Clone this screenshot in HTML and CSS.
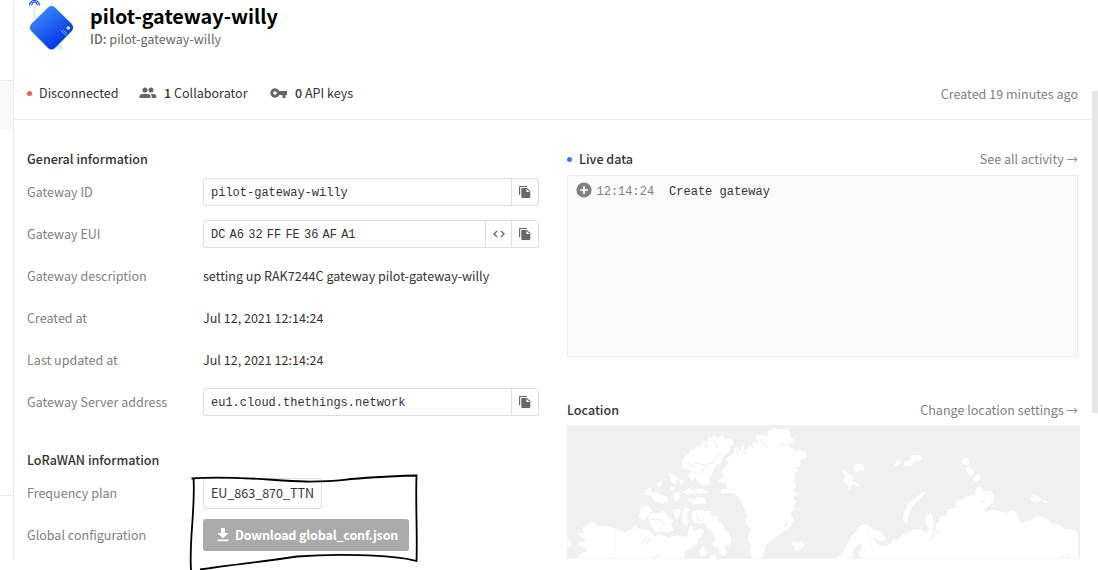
FILE: index.html
```html
<!DOCTYPE html>
<html lang="en">
<head>
<meta charset="utf-8">
<title>pilot-gateway-willy</title>
<link rel="stylesheet" href="styles.css">
</head>
<body>
<svg class="defs" aria-hidden="true">
  <symbol id="copy" viewBox="0 0 14 14"><path d="M1 10V2Q1 1 2 1H9V2H2.2V10Z"/><path d="M4.4 3H9L12.3 6.3V12Q12.3 13 11.3 13H4.4Q3.3 13 3.3 12V4Q3.3 3 4.4 3ZM8.4 3.8V7H11.6Z" fill-rule="evenodd"/></symbol>
</svg>
<div class="page">
  <aside class="sidebar"><div class="nav-active"></div><div class="nav-rest"></div></aside>
  <main class="main">
    <header class="header">
      <div class="identity">
        <svg class="logo" width="48" height="52" viewBox="0 0 48 52">
          <defs><linearGradient id="blue" x1=".35" y1="0" x2=".65" y2="1" gradientTransform="rotate(-20 .5 .5)"><stop offset="0" stop-color="#3e8cff"/><stop offset="1" stop-color="#002be2"/></linearGradient></defs>
          <path d="M7.500 7V20M28 44L34 50M31 44L36 49" stroke="#d5eaff" stroke-width="2" fill="none"/>
          <path d="M2.500 5.500A5 5 0 1 1 12.500 5.500M5 5.500A2.600 2.600 0 1 1 10 5.500" fill="none" stroke="#2450dc" stroke-width="1.200"/>
          <path d="M21 7.500Q24.500 4.200 28 7.500L44.300 23.500Q47.800 27.500 44.300 31.500L28 48Q24.500 51.200 21 48L4.700 31.500Q1.200 27.500 4.700 23.500Z" fill="url(#blue)"/>
          <circle cx="41.300" cy="28" r="1.800" fill="#d9efff"/>
          <path d="M34 30.500L39 35.500M36.300 30L40 33.700" stroke="#8fc5ff" stroke-width="1"/>
        </svg>
        <div class="titles">
          <h1>pilot-gateway-willy</h1>
          <p class="gid"><b>ID:</b> pilot-gateway-willy</p>
        </div>
      </div>
      <div class="status">
        <i class="dot red"></i><span class="disc">Disconnected</span>
        <svg class="people" width="18" height="12" viewBox="0 0 18 12"><g fill="#666"><circle cx="6" cy="3" r="2.500"/><circle cx="12" cy="3" r="2.500"/><path d="M.5 11V9Q.5 6.700 6 6.700T11.500 9V11ZM12.700 11V9Q12.700 7.600 11.500 6.800Q17.300 6.800 17.300 9V11Z"/></g></svg>
        <span class="collab"><b>1</b> Collaborator</span>
        <svg class="key" width="18" height="12" viewBox="0 0 18 12"><path fill="#666" fill-rule="evenodd" d="M9.300 4A4.700 4.700 0 1 0 9.300 8H12.500V11H15.500V8H17V4ZM5 4.200A1.800 1.800 0 1 1 5 7.800A1.800 1.800 0 1 1 5 4.200Z"/></svg>
        <span class="keys"><b>0</b> API keys</span>
        <span class="created">Created 19 minutes ago</span>
      </div>
    </header>
    <div class="columns">
      <section class="info">
        <h2>General information</h2>
        <div class="row"><span class="label">Gateway ID</span><div class="field"><code>pilot-gateway-willy</code><span class="btn"><svg><use href="#copy"/></svg></span></div></div>
        <div class="row"><span class="label">Gateway EUI</span><div class="field"><code class="eui"><span>DC</span><span>A6</span><span>32</span><span>FF</span><span>FE</span><span>36</span><span>AF</span><span>A1</span></code><span class="btn narrow"><svg viewBox="0 0 14 14"><path d="M5 4L2 7L5 10M9 4L12 7L9 10" fill="none" stroke="#666" stroke-width="1.300"/></svg></span><span class="btn"><svg><use href="#copy"/></svg></span></div></div>
        <div class="row"><span class="label">Gateway description</span><span class="desc">setting up RAK7244C gateway pilot-gateway-willy</span></div>
        <div class="row"><span class="label">Created at</span><span class="date">Jul 12, 2021 12:14:24</span></div>
        <div class="row"><span class="label">Last updated at</span><span class="date">Jul 12, 2021 12:14:24</span></div>
        <div class="row"><span class="label">Gateway Server address</span><div class="field"><code>eu1.cloud.thethings.network</code><span class="btn"><svg><use href="#copy"/></svg></span></div></div>
        <h2 class="lora">LoRaWAN information</h2>
        <div class="row"><span class="label">Frequency plan</span><span class="tag">EU_863_870_TTN</span></div>
        <div class="row"><span class="label">Global configuration</span><span class="download"><svg width="12" height="14" viewBox="0 0 12 14"><path d="M4 0H8V5H11.500L6 10.300L.5 5H4ZM.5 11.500H11.500V13.200H.5Z" fill="#fff"/></svg><span>Download global_conf.json</span></span></div>
      </section>
      <section class="side">
        <div class="head"><h2><i class="dot blue"></i>Live data</h2><a class="activity">See all activity <span class="arrow">→</span></a></div>
        <div class="events">
          <svg width="16" height="16" viewBox="0 0 16 16"><circle cx="8" cy="8" r="7.600" fill="#808080"/><path d="M8 4V12M4 8H12" stroke="#fff" stroke-width="1.700"/></svg>
          <time>12:14:24</time><code>Create gateway</code>
        </div>
        <div class="head location"><h2>Location</h2><a class="change">Change location settings <span class="arrow">→</span></a></div>
        <svg class="map" width="513" height="134" viewBox="21 90 1539 402">
          <rect x="21" y="90" width="1539" height="402" fill="#f0f0f0"/>
          <g fill="#fff" stroke="#ececec" stroke-width="2" stroke-linejoin="round">
            <path d="M472 258L492 245L482 228L504 205L496 190L518 176L520 160L530 154L540 164L550 148L558 164L567 148L580 158L574 140L592 142L584 124L598 118L622 124L624 108L640 98L662 102L682 100L692 112L690 124L706 132L700 146L684 148L698 160L708 150L700 166L722 163L744 176L740 190L722 196L724 212L708 218L716 226L704 238L708 248L701 256L712 270L700 284L716 298L702 308L712 322L700 330L704 342L694 354L702 374L690 399L665 414L634 440L620 448L614 474L605 492H576L568 470L572 452L562 432L570 402L555 384L560 364L550 338L536 310L520 294L488 298L478 283L500 280L494 265L480 262Z"/>
            <path d="M365 196L375 182L390 170L388 160L402 162L412 148L420 152L432 132L438 142L446 124L454 130L460 118L472 126L488 120L496 132L514 128L524 148L510 158L514 166L490 186L486 202L466 212L462 230L448 248L450 270L430 276L418 268L404 250L396 262L382 242L390 228L366 222Z"/>
            <path d="M326 234L340 236L354 252L346 270L332 258ZM356 248L372 258L368 270L358 266ZM286 268L304 256L308 270L294 278ZM248 300L268 276L278 282L272 292L292 290L300 298L320 302L326 320L308 328L280 316L274 304ZM330 274L346 276L344 288L332 286ZM340 296L356 288L362 308L350 320L338 310ZM366 290L386 278L404 286L420 278L446 290L440 298L400 296L384 302ZM384 306L400 312L412 304L438 308V326L402 330L384 320Z"/>
            <path d="M242 332L266 332L278 346L266 366L250 378L236 366ZM262 364L276 352L298 352L306 346L318 352L326 366L344 374L334 392L344 406L322 414L306 410L292 416L276 402L268 384ZM340 342L360 340L366 350L352 376L342 362ZM368 336L390 340L382 364L388 378L380 398L364 380Z"/>
            <path d="M398 348L420 342L430 348L450 346L458 362L470 360L478 366L476 378L490 388L494 404L506 412L516 430L510 452L494 450L502 470L494 484L478 476L474 462L450 450L466 438L458 414L438 396L428 386L404 386L394 368Z"/>
            <path d="M48 492L62 474L78 470L72 456L54 454L58 440L76 436L52 418L70 410L64 398L82 388L97 379L116 390L152 396L180 404L192 412L212 402L228 388L236 400L268 406L286 422L300 416L324 426L352 420L380 424L386 398L396 390L402 410L416 398L432 402L430 422L416 432L412 448L398 456L376 472L374 492ZM21 430L36 444L28 458H21ZM416 466L430 450L442 474L438 486L420 482ZM446 484L462 478L474 492H450Z"/>
            <path d="M690 446L702 436L706 444L724 438L736 450L728 460L710 470L700 464L702 456Z"/>
            <path d="M842 222L860 226L870 238L884 244L878 258L898 268L896 276L878 268L868 290L860 270L848 258L854 244ZM876 212L896 204L916 216L910 228L888 232ZM1002 208L1018 190L1022 206L1006 216ZM1030 202L1052 192L1048 182L1076 178L1088 190L1074 202L1068 194L1056 212L1036 216ZM1206 190L1222 184L1232 204L1220 212L1204 206ZM1218 216L1234 212L1244 234L1232 244L1218 232ZM1244 242L1252 232L1266 248L1248 262L1238 258ZM1410 308L1422 298L1440 306L1446 318L1430 324L1414 320ZM1448 314L1468 320L1450 326ZM1422 340L1434 342L1430 348Z"/>
            <path d="M1103 288L1090 290L1064 308L1046 324L1032 346L1028 366L1030 382L1046 386L1044 370L1050 354L1056 338L1070 320L1090 302Z"/>
            <path d="M820 492L844 478L862 446L872 424L888 408L896 392L920 386L940 402L960 408L978 428L970 440L958 440L944 430L950 444L974 454L992 444L1000 430L1014 434L1028 418L1046 412L1060 402L1084 402L1094 414L1106 402L1098 388L1094 366L1110 352L1120 364L1122 378L1134 382L1138 372L1134 362L1158 360L1160 342L1184 338L1186 320L1202 314L1212 306L1242 298L1250 276L1262 272L1270 286L1294 288L1304 304L1300 322L1284 336L1276 350L1300 342L1322 348L1344 352L1352 344L1370 352L1378 374L1386 384L1400 376L1418 374L1430 360L1462 370L1474 384L1494 386L1514 400L1538 402L1556 412V492Z"/>
          </g>
          <g fill="none" stroke="#f1f1f1" stroke-width="4" stroke-linejoin="round">
            <path d="M430 142L440 158M462 136L470 158M402 204L420 206L438 214L424 234M386 202L404 220M484 174L470 184L458 204L440 208M530 164L536 184M552 166L556 178M600 128L612 146L626 162M654 156L664 146L682 148M670 374L684 386L672 394M262 374L298 374L318 390M410 352L414 374L438 390M244 446L256 434L270 432L258 450M280 490L300 476M1122 378L1122 420L1108 436M1134 376L1124 392L1132 414L1144 418M1258 324L1276 316M1496 488L1512 484M1528 478L1522 492"/>
            <path d="M166 400V492M892 410L874 454M924 396L930 440L940 470" stroke="#f9f9f9"/>
          </g>
          <path d="M876 492L882 462L902 444L908 454L894 476L902 492Z" fill="#f0f0f0"/>
        </svg>
      </section>
    </div>
  </main>
  <div class="scroll"></div>
  <svg class="ink" width="232" height="98" viewBox="188 472 232 98"><path d="M191.500 478.500C233 475 275 481 305 481.500C352 482 330 478 416.500 475.500C415.500 505 417.500 535 416.500 561C390 554 330 554 297 556.500C260 562 230 565 200 569.500M193.500 477.500C195.500 507 189 540 191 570" fill="none" stroke="#000" stroke-width="1.800"/></svg>
</div>
</body>
</html>
```
FILE: styles.css
```css
* { box-sizing: border-box; }
body { margin: 0; background: #fff; color: #333; font: 12.56px/20px "Noto Sans CJK SC", "Open Sans", sans-serif; white-space: nowrap; }
h1, h2, p { margin: 0; }
h2 { font-size: 12.56px; line-height: 20px; font-weight: 500; }
b { font-weight: 500; }
code, time { font: 12px/20px "Liberation Mono", monospace; }
.defs { display: none; }
.page { position: relative; width: 1098px; height: 570px; display: flex; overflow: hidden; }
.sidebar { width: 14px; height: 559px; border-right: 1px solid #ebebeb; padding-top: 80px; }
.nav-active { height: 50px; background: #f8f8f8; border-top: 1px solid #ebebeb; }
.nav-rest { height: 366px; border-bottom: 1px solid #ebebeb; }
.main { width: 1078px; }
.header { height: 120px; border-bottom: 1px solid #ebebeb; }
.identity { display: flex; height: 83px; padding-left: 13px; }
.titles { padding: 3px 0 0 15px; }
h1 { color: #000; font-size: 19.8px; line-height: 26px; font-weight: 700; }
.gid { color: #666; letter-spacing: .03px; }
.status { display: flex; align-items: center; height: 20px; padding-left: 13px; }
.dot { display: block; width: 5px; height: 5px; border-radius: 50%; flex: none; }
.red { background: #ff5656; }
.blue { background: #4172ff; margin-right: 7px; }
.disc { margin-left: 7px; width: 100px; }
.people { margin-right: 7px; }
.collab { width: 106px; }
.key { margin-right: 7px; }
.created { margin-left: auto; color: #808080; padding: 2px 14px 0 0; }
.columns { display: flex; height: 439px; }
.info { width: 512px; margin-left: 13px; padding-top: 29px; }
.side { width: 513px; margin-left: 28px; padding-top: 29px; }
.row { display: flex; height: 42px; align-items: center; }
.info h2 { margin-bottom: 2px; }
.info .lora { margin-top: 27px; }
.label { width: 176px; color: #808080; }
.field { width: 336px; height: 28px; display: flex; border: 1px solid #dedede; border-radius: 3px; }
.field code { flex: 1; padding: 4px 7px 2px; }
.eui span { display: inline-block; width: 18.600px; }
.btn { width: 27px; border-left: 1px solid #dedede; display: flex; align-items: center; justify-content: center; fill: #666; }
.narrow { width: 26px; }
.btn svg { width: 14px; height: 14px; }
.tag { height: 31px; width: 119px; border: 1px solid #dedede; border-radius: 3px; padding: 4px 7px; letter-spacing: -.03px; }
.download { height: 32px; width: 206px; display: flex; align-items: center; background: #aaa; color: #fff; border-radius: 3px; padding-left: 14px; font-weight: 700; letter-spacing: -.18px; }
.download svg { margin-right: 6px; }
.head { display: flex; justify-content: space-between; width: 511px; height: 26px; }
.head h2 { display: flex; align-items: center; height: 20px; }
.head a { color: #808080; }
.arrow { font-size: 11.5px; }
.events { width: 511px; height: 182px; background: #fafafa; border: 1px solid #ebebeb; display: flex; padding: 6px 7.500px; }
.events time { margin: 0 15px 0 5px; color: #808080; }
.location { margin-top: 43px; height: 25px; }
.map { display: block; }
.scroll { width: 6px; height: 322px; margin-top: 91px; background: #e6e6e6; }
.ink { position: absolute; left: 188px; top: 472px; }
```
